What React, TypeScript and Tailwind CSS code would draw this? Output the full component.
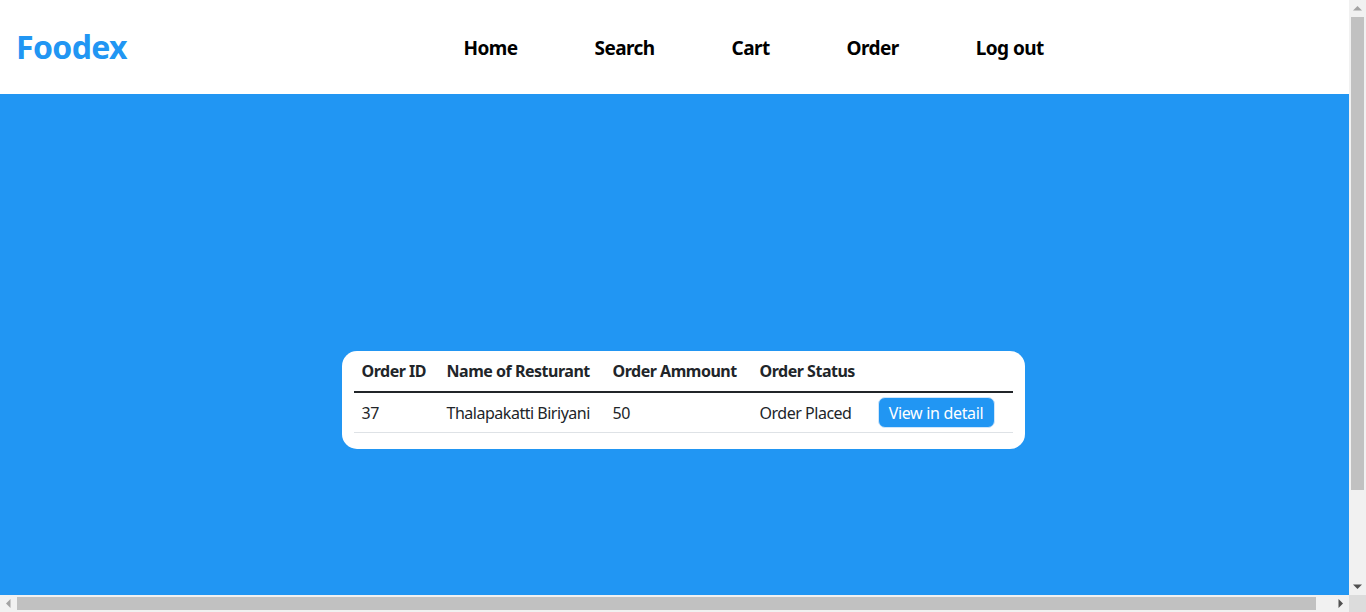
import React from "react";

function Tri({ dir, color }: { dir: "up" | "down" | "left" | "right"; color: string }) {
  const pts =
    dir === "up"
      ? "4,6 8.5,10.5 -0.5,10.5"
      : dir === "down"
      ? "-0.5,6.5 8.5,6.5 4,11"
      : dir === "left"
      ? "6,4 10.5,8.5 10.5,-0.5"
      : "6.5,-0.5 6.5,8.5 11,4";
  const isV = dir === "up" || dir === "down";
  return (
    <svg width={isV ? 9 : 17} height={isV ? 17 : 9} viewBox={isV ? "0 0 8 17" : "0 0 17 8"}>
      <polygon points={pts} fill={color} />
    </svg>
  );
}

export default function App() {
  const font = { fontFamily: '"Noto Sans", "Liberation Sans", sans-serif' };
  return (
    <div className="flex h-[612px] w-[1366px] flex-col overflow-hidden text-[#212529]" style={font}>
      <div className="flex h-[595px]">
        <div className="w-[1349px] overflow-hidden">
          <div className="w-[1366px]">
            <header className="flex h-[94px] items-center bg-white pl-4">
              <div className="w-[409px] text-[32px] font-bold leading-none tracking-[-0.02em] text-[#2196f3]">
                Foodex
              </div>
              <nav className="flex items-center text-[19px] font-bold tracking-[-0.03em] text-black">
                {["Home", "Search", "Cart", "Order", "Log out"].map((t) => (
                  <a key={t} className="px-[38.5px] pt-[3px]">
                    {t}
                  </a>
                ))}
              </nav>
            </header>
            <section className="flex h-[612px] w-[1366px] items-center justify-center bg-[#2196f3]">
              <div className="w-1/2 rounded-[15px] bg-white px-3">
                <table className="mb-4 w-full border-collapse text-[16px] leading-6 tracking-[-0.03em]">
                  <thead>
                    <tr className="border-b-2 border-[#212529]">
                      <th className="w-[85px] p-2 text-left font-bold">Order ID</th>
                      <th className="w-[166px] p-2 text-left font-bold">Name of Resturant</th>
                      <th className="w-[147px] p-2 text-left font-bold">Order Ammount</th>
                      <th className="w-[118px] p-2 text-left font-bold">Order Status</th>
                      <th className="p-2"></th>
                    </tr>
                  </thead>
                  <tbody>
                    <tr className="border-b border-[#dee2e6]">
                      <td className="h-[40px] px-2 py-0">37</td>
                      <td className="px-2 py-0">Thalapakatti Biriyani</td>
                      <td className="px-2 py-0">50</td>
                      <td className="px-2 py-0">Order Placed</td>
                      <td className="px-2 py-0">
                        <button className="flex h-[31px] w-[117px] items-center justify-center rounded-[7px] border border-[#cfe6fb] bg-[#2196f3] text-[16px] tracking-[-0.02em] text-white">
                          View in detail
                        </button>
                      </td>
                    </tr>
                  </tbody>
                </table>
              </div>
            </section>
          </div>
        </div>
        <div className="flex w-[17px] flex-col bg-[#f1f1f1]">
          <div className="flex h-[17px] items-center justify-center">
            <Tri dir="up" color="#a3a3a3" />
          </div>
          <div className="flex-1">
            <div className="mx-[2px] h-[473px] bg-[#c1c1c1]"></div>
          </div>
          <div className="flex h-[17px] items-center justify-center">
            <Tri dir="down" color="#505050" />
          </div>
        </div>
      </div>
      <div className="flex h-[17px]">
        <div className="flex w-[1349px] bg-[#f1f1f1]">
          <div className="flex w-[17px] items-center justify-center">
            <Tri dir="left" color="#a3a3a3" />
          </div>
          <div className="flex flex-1 items-center">
            <div className="h-[13px] w-[1299px] bg-[#c1c1c1]"></div>
          </div>
          <div className="flex w-[17px] items-center justify-center">
            <Tri dir="right" color="#505050" />
          </div>
        </div>
        <div className="w-[17px] bg-[#dcdcdc]"></div>
      </div>
    </div>
  );
}
